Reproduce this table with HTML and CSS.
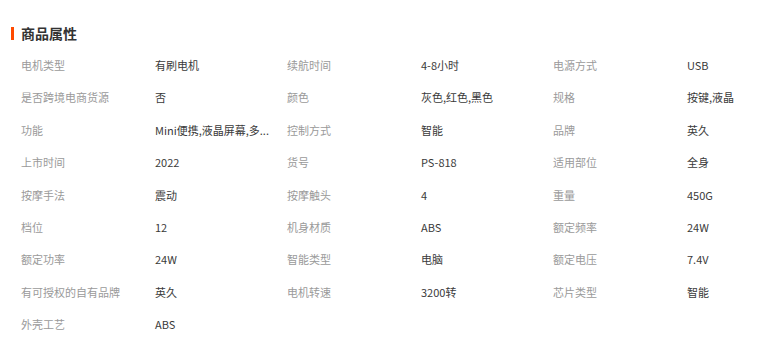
FILE: index.html
```html
<!DOCTYPE html>
<html lang="zh-CN">
<head>
<meta charset="utf-8">
<title>商品属性</title>
<link rel="stylesheet" href="styles.css">
</head>
<body>
<div class="page">
  <div class="title"><span class="bar"></span><h2>商品属性</h2></div>
  <div class="grid">
    <div class="k">电机类型</div><div class="v">有刷电机</div>
    <div class="k">续航时间</div><div class="v">4-8小时</div>
    <div class="k">电源方式</div><div class="v">USB</div>

    <div class="k">是否跨境电商货源</div><div class="v">否</div>
    <div class="k">颜色</div><div class="v">灰色,红色,黑色</div>
    <div class="k">规格</div><div class="v">按键,液晶</div>

    <div class="k">功能</div><div class="v">Mini便携,液晶屏幕,多...</div>
    <div class="k">控制方式</div><div class="v">智能</div>
    <div class="k">品牌</div><div class="v">英久</div>

    <div class="k">上市时间</div><div class="v">2022</div>
    <div class="k">货号</div><div class="v">PS-818</div>
    <div class="k">适用部位</div><div class="v">全身</div>

    <div class="k">按摩手法</div><div class="v">震动</div>
    <div class="k">按摩触头</div><div class="v">4</div>
    <div class="k">重量</div><div class="v">450G</div>

    <div class="k">档位</div><div class="v">12</div>
    <div class="k">机身材质</div><div class="v">ABS</div>
    <div class="k">额定频率</div><div class="v">24W</div>

    <div class="k">额定功率</div><div class="v">24W</div>
    <div class="k">智能类型</div><div class="v">电脑</div>
    <div class="k">额定电压</div><div class="v">7.4V</div>

    <div class="k">有可授权的自有品牌</div><div class="v">英久</div>
    <div class="k">电机转速</div><div class="v">3200转</div>
    <div class="k">芯片类型</div><div class="v">智能</div>

    <div class="k">外壳工艺</div><div class="v">ABS</div>
  </div>
</div>
</body>
</html>
```

FILE: styles.css
```css
html, body {
  margin: 0;
  padding: 0;
  background: #fff;
  overflow: hidden;
}

body {
  font-family: "Noto Sans CJK SC", "Noto Sans", sans-serif;
  color: #333;
}

.page {
  padding: 23px 0 0 11px;
}

.title {
  display: flex;
  align-items: center;
  gap: 7px;
  height: 20px;
}

.bar {
  width: 3px;
  height: 13px;
  background: #ff4a00;
}

.title h2 {
  margin: 0;
  font-size: 14px;
  line-height: 20px;
  font-weight: 700;
  color: #333;
}

.grid {
  margin-top: 6px;
  padding-left: 10px;
  display: grid;
  grid-template-columns: 134px 132px 134px 132px 134px 1fr;
  grid-auto-rows: 32.375px;
}

.k, .v {
  font-size: 11px;
  line-height: 32px;
  white-space: nowrap;
}

.k {
  color: #9a9a9a;
}

.v {
  color: #3a3a3a;
}
```
